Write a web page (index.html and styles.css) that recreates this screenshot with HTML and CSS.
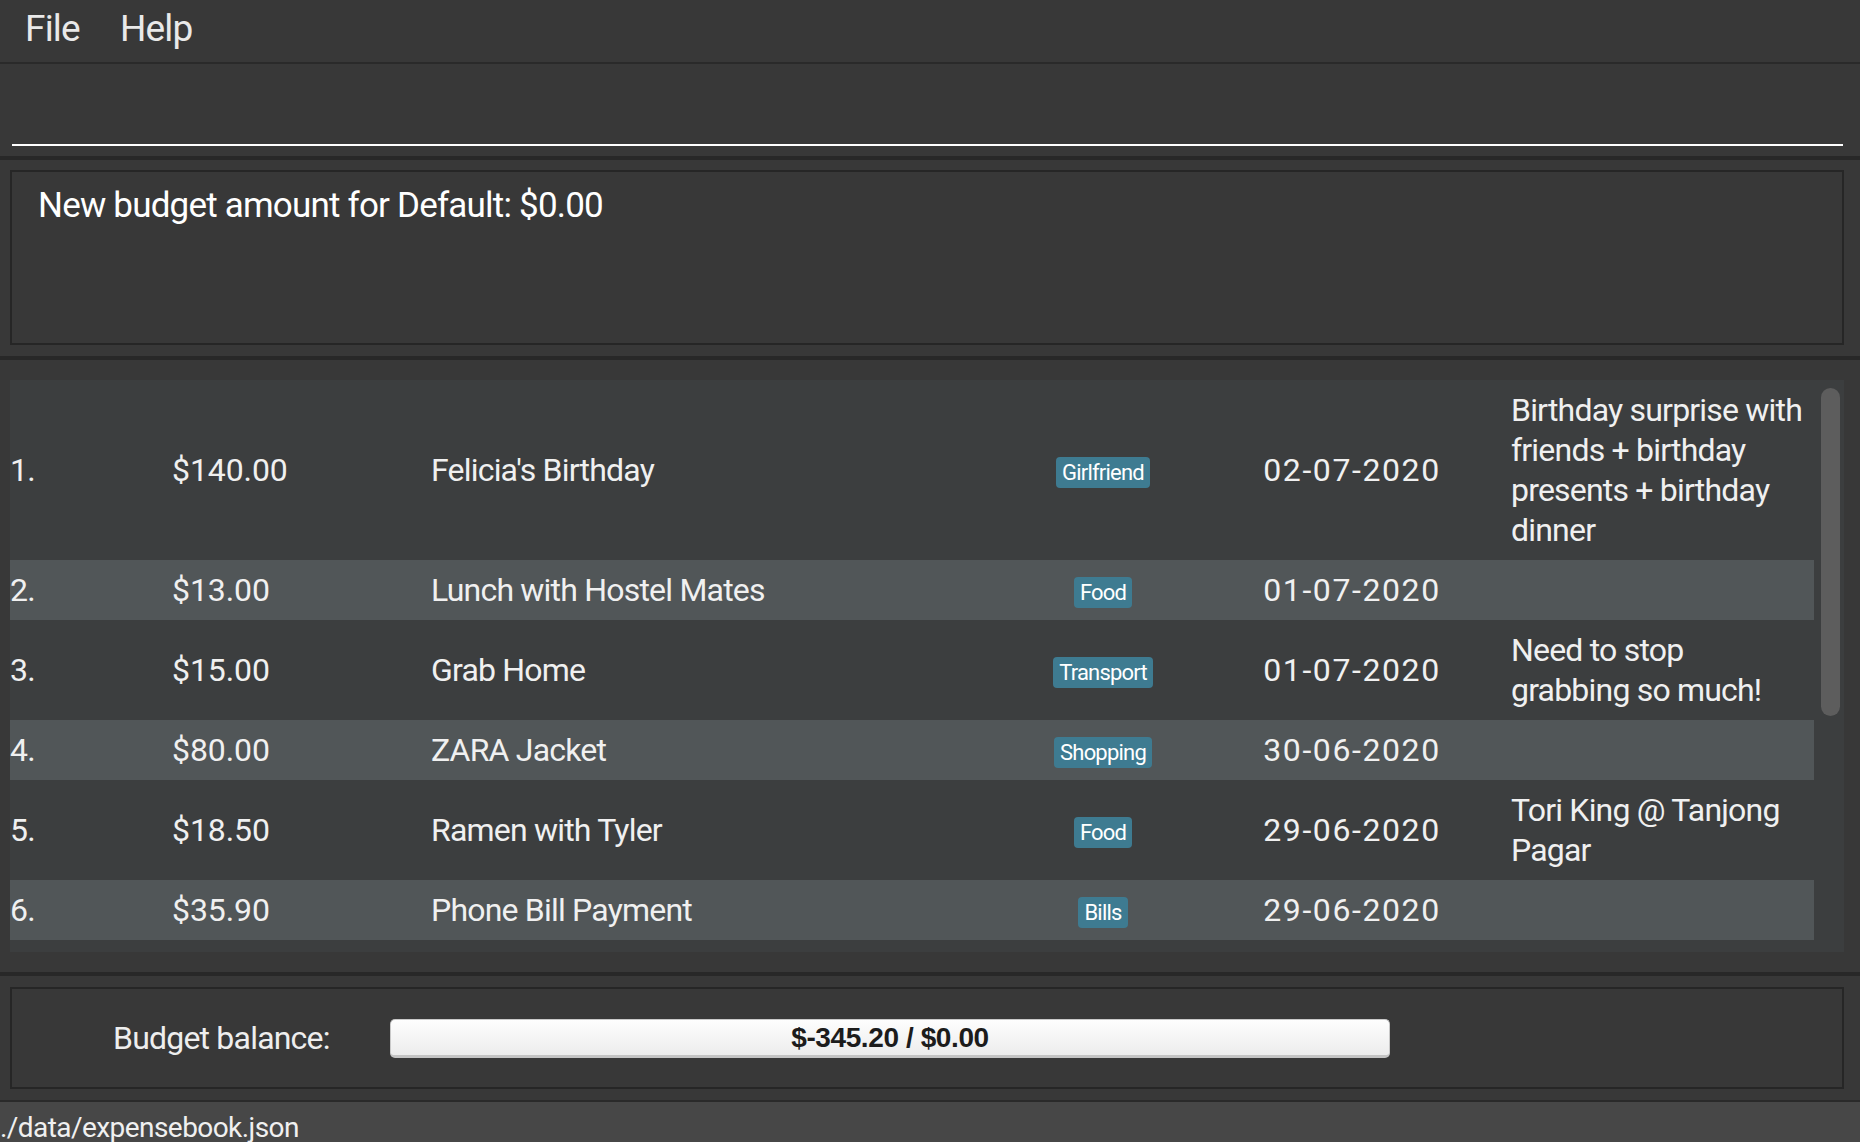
FILE: index.html
```html
<!DOCTYPE html>
<html lang="en">
<head>
<meta charset="utf-8">
<title>ExpenseBook</title>
<link rel="stylesheet" href="styles.css">
</head>
<body>
<div class="app">
  <nav class="menubar">
    <span class="menu-item">File</span>
    <span class="menu-item">Help</span>
  </nav>

  <section class="command">
    <div class="cmd-input"></div>
  </section>

  <section class="result">
    <div class="result-box">New budget amount for Default: $0.00</div>
  </section>

  <section class="list-section">
    <div class="list-view">
      <div class="rows">
        <div class="row">
          <span class="idx">1.</span>
          <span class="amt">$140.00</span>
          <span class="desc">Felicia's Birthday</span>
          <span class="tagcell"><span class="tag">Girlfriend</span></span>
          <span class="date">02-07-2020</span>
          <span class="remark">Birthday surprise with<br>friends + birthday<br>presents + birthday<br>dinner</span>
        </div>
        <div class="row">
          <span class="idx">2.</span>
          <span class="amt">$13.00</span>
          <span class="desc">Lunch with Hostel Mates</span>
          <span class="tagcell"><span class="tag">Food</span></span>
          <span class="date">01-07-2020</span>
          <span class="remark"></span>
        </div>
        <div class="row">
          <span class="idx">3.</span>
          <span class="amt">$15.00</span>
          <span class="desc">Grab Home</span>
          <span class="tagcell"><span class="tag">Transport</span></span>
          <span class="date">01-07-2020</span>
          <span class="remark">Need to stop<br>grabbing so much!</span>
        </div>
        <div class="row">
          <span class="idx">4.</span>
          <span class="amt">$80.00</span>
          <span class="desc">ZARA Jacket</span>
          <span class="tagcell"><span class="tag">Shopping</span></span>
          <span class="date">30-06-2020</span>
          <span class="remark"></span>
        </div>
        <div class="row">
          <span class="idx">5.</span>
          <span class="amt">$18.50</span>
          <span class="desc">Ramen with Tyler</span>
          <span class="tagcell"><span class="tag">Food</span></span>
          <span class="date">29-06-2020</span>
          <span class="remark">Tori King @ Tanjong<br>Pagar</span>
        </div>
        <div class="row">
          <span class="idx">6.</span>
          <span class="amt">$35.90</span>
          <span class="desc">Phone Bill Payment</span>
          <span class="tagcell"><span class="tag">Bills</span></span>
          <span class="date">29-06-2020</span>
          <span class="remark"></span>
        </div>
      </div>
      <div class="scroll-track"><div class="scroll-thumb"></div></div>
    </div>
  </section>

  <section class="budget">
    <div class="budget-box">
      <span class="budget-label">Budget balance:</span>
      <div class="bar">$-345.20 / $0.00</div>
    </div>
  </section>

  <footer class="status">./data/expensebook.json</footer>
</div>
</body>
</html>
```
FILE: styles.css
```css
* { box-sizing: border-box; }
html, body { margin: 0; padding: 0; }
body {
  width: 1860px;
  height: 1142px;
  overflow: hidden;
  background: #383838;
  font-family: Roboto, "Liberation Sans", sans-serif;
  letter-spacing: -0.05em;
  color: #f0f0f0;
}
.app { display: flex; flex-direction: column; height: 1142px; }

.menubar {
  height: 62px;
  display: flex;
  padding-left: 25px;
  gap: 40px;
  font-size: 37px;
  line-height: 58px;
  color: #e9e9e9;
}

.command {
  height: 94px;
  border-top: 2px solid #2a2a2a;
  padding: 0 17px 10px 12px;
  display: flex;
  align-items: flex-end;
}
.cmd-input { flex: 1; height: 40px; border-bottom: 2px solid #ffffff; }

.result {
  height: 200px;
  border-top: 4px solid #282828;
  padding: 10px 16px 11px 10px;
}
.result-box {
  height: 100%;
  border: 2px solid #262626;
  padding: 12px 26px;
  font-size: 35px;
  line-height: 44px;
  color: #ffffff;
}

.list-section {
  height: 616px;
  border-top: 4px solid #282828;
  padding: 20px 16px 20px 10px;
}
.list-view { height: 100%; background: #3c3e3f; display: flex; }
.rows { width: 1804px; }
.row {
  display: grid;
  grid-template-columns: 162px 259px 572px 200px 298px 313px;
  align-items: center;
  padding: 10px 0;
  font-size: 32px;
  line-height: 40px;
  color: #f0f0f0;
  background: #3c3e3f;
}
.row:nth-child(even) { background: #515658; }
.amt { letter-spacing: -0.1px; }
.date { text-align: center; letter-spacing: 1.6px; }
.tagcell { text-align: center; }
.tag {
  display: inline-block;
  background: #3e7b91;
  color: #ffffff;
  font-size: 22px;
  line-height: 27px;
  padding: 2px 6px;
  border-radius: 4px;
  vertical-align: middle;
}
.remark { padding-left: 10px; }

.scroll-track { flex: 1; padding: 8px 4px 0 7px; }
.scroll-thumb { width: 19px; height: 328px; border-radius: 10px; background: #5d5d5d; }

.budget {
  height: 128px;
  border-top: 4px solid #282828;
  padding: 11px 16px 11px 10px;
}
.budget-box {
  height: 100%;
  border: 2px solid #262626;
  display: flex;
  align-items: center;
  padding-left: 101px;
}
.budget-label { width: 277px; font-size: 32px; line-height: 40px; color: #eeeeee; }
.bar {
  width: 1000px;
  height: 39px;
  border-radius: 5px;
  border: 1px solid #c9c9c9;
  border-bottom: 3px solid #c4c4c4;
  background: linear-gradient(#fefefe, #ececec);
  font-family: "Liberation Sans", Arial, sans-serif;
  font-weight: bold;
  font-size: 28px;
  line-height: 35px;
  letter-spacing: -0.4px;
  color: #1c1c1c;
  text-align: center;
}

.status {
  height: 42px;
  border-top: 2px solid #2a2a2a;
  background: #474747;
  padding-top: 6px;
  font-size: 28px;
  line-height: 40px;
  letter-spacing: -0.02em;
  color: #f0f0f0;
  overflow: hidden;
  white-space: nowrap;
}
```
